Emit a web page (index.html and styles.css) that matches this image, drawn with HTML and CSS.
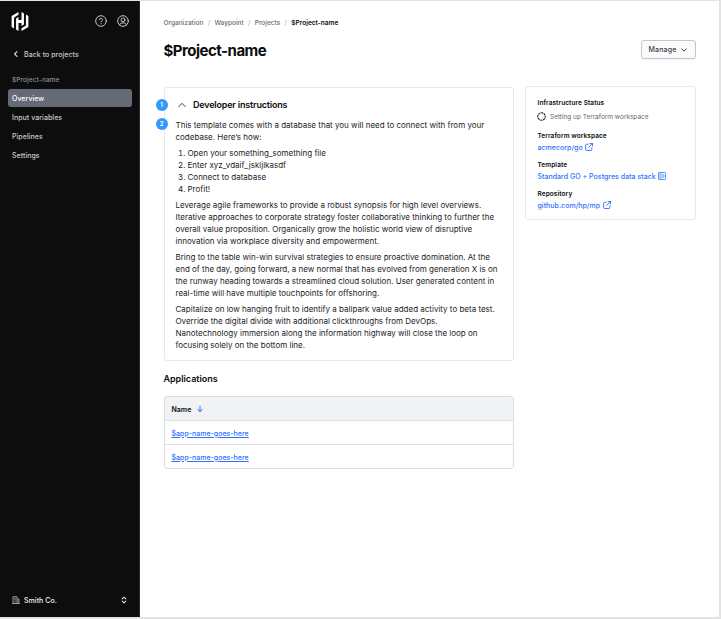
FILE: index.html
```html
<!DOCTYPE html>
<html lang="en">
<head>
<meta charset="utf-8">
<title>$Project-name</title>
<link rel="stylesheet" href="styles.css">
</head>
<body>
<div class="app">
  <aside class="sidebar">
    <div class="brand">
      <svg class="logo" viewBox="0 0 24 24" fill="#fff"><path d="M10.1 0L1.4 5.03v13.95l3.1 1.8V6.8l5.6-3.24zM13.9 0v10h-3.8V6.4L7 8.2v13.98L10.1 24V14h3.8v3.6l3.1-1.8V1.8zM13.9 24l8.7-5.03V5.03l-3.1-1.8V17.2l-5.6 3.25z"/></svg>
      <svg class="top-icon" viewBox="0 0 16 16" fill="none" stroke="#c9cacf" stroke-width="1.3" stroke-linecap="round"><circle cx="8" cy="8" r="7.1"/><path d="M6 6.3a2 2 0 1 1 2.9 1.8c-.6.3-.9.6-.9 1.3M8 11.7v.1"/></svg>
      <svg class="top-icon" viewBox="0 0 16 16" fill="none" stroke="#c9cacf" stroke-width="1.3" stroke-linecap="round"><circle cx="8" cy="8" r="7.1"/><circle cx="8" cy="6.5" r="2.6"/><path d="M3.6 13.2c.3-1.7 1.3-2.5 2.7-2.5h3.4c1.4 0 2.4.8 2.7 2.5"/></svg>
    </div>
    <a class="back"><svg viewBox="0 0 8 8" fill="none" stroke="#dcdde0" stroke-width="1.1" stroke-linecap="round" stroke-linejoin="round"><path d="M5 1.6L2.6 4 5 6.4"/></svg><span>Back to projects</span></a>
    <div class="nav-title"><span>$Project-name</span></div>
    <nav>
      <a class="active"><span>Overview</span></a>
      <a><span>Input variables</span></a>
      <a><span>Pipelines</span></a>
      <a><span>Settings</span></a>
    </nav>
    <div class="org">
      <svg viewBox="0 0 16 16" fill="none" stroke="#c2c5cb" stroke-width="1.5"><path d="M2 15V1.5h8V15M10 6h4v9M.5 15h15M4.5 4.5h3M4.5 7.5h3M4.5 10.5h3M12 9v3M6 15v-2"/></svg>
      <span>Smith Co.</span>
      <svg class="updown" viewBox="0 0 8 8" fill="none" stroke="#dcdde0" stroke-width="1.1" stroke-linecap="round" stroke-linejoin="round"><path d="M2.2 2.9L4 1.2l1.8 1.7M2.2 5.1L4 6.8l1.8-1.7"/></svg>
    </div>
  </aside>
  <main>
    <div class="crumbs"><span>Organization</span><i>/</i><span>Waypoint</span><i>/</i><span>Projects</span><i>/</i><b>$Project-name</b></div>
    <header>
      <h1>$Project-name</h1>
      <button>Manage<svg viewBox="0 0 8 8" fill="none" stroke="#3b3d45" stroke-width="1" stroke-linecap="round" stroke-linejoin="round"><path d="M1.8 3L4 5.2 6.2 3"/></svg></button>
    </header>
    <div class="columns">
      <div class="left">
        <section class="card instructions">
          <em class="pin one">1</em>
          <em class="pin two">2</em>
          <h2><svg viewBox="0 0 8 8" fill="none" stroke="#3b3d45" stroke-width="1" stroke-linecap="round" stroke-linejoin="round"><path d="M.8 5.6L4 2.3l3.2 3.3"/></svg>Developer instructions</h2>
          <p>This template comes with a database that you will need to connect with from your<br>codebase. Here’s how:</p>
          <ol>
            <li>Open your something_something file</li>
            <li>Enter xyz_vdaif_jskljlkasdf</li>
            <li>Connect to database</li>
            <li>Profit!</li>
          </ol>
          <p>Leverage agile frameworks to provide a robust synopsis for high level overviews.<br>Iterative approaches to corporate strategy foster collaborative thinking to further the<br>overall value proposition. Organically grow the holistic world view of disruptive<br>innovation via workplace diversity and empowerment.</p>
          <p>Bring to the table win-win survival strategies to ensure proactive domination. At the<br>end of the day, going forward, a new normal that has evolved from generation X is on<br>the runway heading towards a streamlined cloud solution. User generated content in<br>real-time will have multiple touchpoints for offshoring.</p>
          <p>Capitalize on low hanging fruit to identify a ballpark value added activity to beta test.<br>Override the digital divide with additional clickthroughs from DevOps.<br>Nanotechnology immersion along the information highway will close the loop on<br>focusing solely on the bottom line.</p>
        </section>
        <h3>Applications</h3>
        <div class="table">
          <div class="row head"><span>Name</span><svg viewBox="0 0 8 8" fill="none" stroke="#2e71ff" stroke-width="1" stroke-linecap="round" stroke-linejoin="round"><path d="M4 1.2v5.4M1.7 4.4L4 6.7l2.3-2.3"/></svg></div>
          <div class="row"><a>$app-name-goes-here</a></div>
          <div class="row"><a>$app-name-goes-here</a></div>
        </div>
      </div>
      <aside class="card status">
        <h4>Infrastructure Status</h4>
        <div class="progress"><svg viewBox="0 0 16 16" fill="none" stroke="#2b2d33" stroke-width="2"><circle cx="8" cy="8" r="6.7" stroke-dasharray="4.3 .96" stroke-dashoffset="2"/></svg><span>Setting up Terraform workspace</span></div>
        <h4>Terraform workspace</h4>
        <a><span>acmecorp/go</span><svg viewBox="0 0 16 16" fill="none" stroke="#2e71ff" stroke-width="1.8" stroke-linecap="round" stroke-linejoin="round"><path d="M6.5 2.5H3A1.8 1.8 0 0 0 1.2 4.3v8.9A1.8 1.8 0 0 0 3 15h8.8a1.8 1.8 0 0 0 1.8-1.8V9.7M10 1h5v5M15 1L7.3 8.7"/></svg></a>
        <h4>Template</h4>
        <a><span>Standard GO + Postgres data stack</span><svg viewBox="0 0 16 16" fill="none" stroke="#2e71ff" stroke-width="1.5" stroke-linejoin="round"><rect x="1" y="1" width="14" height="14" rx="1.5"/><path d="M4 1v14M7 4.2h2.4L12.6 8l-3.2 3.8H7M7 6.2L8.8 8 7 9.8"/></svg></a>
        <h4>Repository</h4>
        <a><span>github.com/hp/mp</span><svg viewBox="0 0 16 16" fill="none" stroke="#2e71ff" stroke-width="1.8" stroke-linecap="round" stroke-linejoin="round"><path d="M6.5 2.5H3A1.8 1.8 0 0 0 1.2 4.3v8.9A1.8 1.8 0 0 0 3 15h8.8a1.8 1.8 0 0 0 1.8-1.8V9.7M10 1h5v5M15 1L7.3 8.7"/></svg></a>
      </aside>
    </div>
  </main>
</div>
</body>
</html>
```
FILE: styles.css
```css
* { box-sizing: border-box; }
body { margin: 0; background: #e3e3e3; font-family: Inter, "Liberation Sans", sans-serif; color: #0c0c0e; }
svg { display: block; flex: none; }
h1, h2, h3, h4, p, ol { margin: 0; }
.app { display: flex; height: 619px; padding: 1px 2px 2px 0; }

.sidebar { width: 140px; background: #0d0d0e; color: #c9cacf; padding: 10px 8px 0; display: flex; flex-direction: column; font-size: 7px; font-weight: 500; letter-spacing: .05px; border-right: 1px solid #28282a; }
.brand { display: flex; align-items: center; height: 20px; padding: 0 2px 0 2px; gap: 10px; }
.logo { width: 20px; height: 19px; margin-right: auto; }
.top-icon { width: 12px; height: 12px; }
.back { display: flex; align-items: center; height: 12px; margin-top: 17px; padding-left: 4px; gap: 4px; }
.back svg { width: 8px; height: 8px; }
.nav-title { margin-top: 14px; height: 12px; line-height: 13px; padding-left: 4px; font-size: 6.5px; letter-spacing: .1px; color: #8c909c; }
nav { display: flex; flex-direction: column; gap: 1px; margin-top: 3px; }
nav a { height: 18px; line-height: 20px; border-radius: 3px; padding-left: 4px; }
nav .active { width: 124px; background: #656a76; color: #fff; }
.org { display: flex; align-items: center; margin-top: auto; margin-bottom: 11px; height: 12px; padding: 0 3px 0 4px; gap: 4px; color: #efeff1; }
.org svg { width: 8px; height: 8px; }
.org .updown { margin-left: auto; }

main { flex: 1; background: #fff; padding: 15px 23px 0 23.5px; }
.crumbs { display: flex; height: 12px; line-height: 14px; font-size: 6.5px; letter-spacing: .02px; color: #656a76; font-weight: 500; }
.crumbs i { font-style: normal; color: #b5b7bd; width: 11px; text-align: center; }
.crumbs b { font-weight: 600; color: #0c0c0e; }
header { display: flex; justify-content: space-between; align-items: center; height: 19px; margin-top: 12px; }
h1 { font-size: 15px; font-weight: 700; line-height: 19px; padding-top: 2px; letter-spacing: -.5px; }
button { display: flex; align-items: center; justify-content: center; gap: 4px; width: 55px; height: 19px; padding: 0; border: 1px solid #c2c5cb; border-radius: 3px; background: #fafafa; color: #3b3d45; font: 500 7px Inter, sans-serif; letter-spacing: .15px; box-shadow: 0 1px 1px #0000000d; }
button svg { width: 8px; height: 8px; }
.columns { display: flex; align-items: flex-start; justify-content: space-between; margin-top: 27px; }
.left { width: 350px; margin-top: 1px; }
.card { border: 1px solid #e7e8ea; border-radius: 3px; background: #fff; }
.instructions { position: relative; height: 274px; padding: 11px 11px 0; font-size: 8px; line-height: 12px; color: #1c1c1f; }
.instructions p { margin-top: 4px; white-space: nowrap; }
.instructions h2 { display: flex; align-items: center; gap: 7.5px; height: 12px; margin-bottom: 8px; padding-left: 2px; font-size: 9px; letter-spacing: -.19px; font-weight: 600; color: #0c0c0e; }
.instructions h2 svg { width: 8px; height: 8px; }
ol { margin-top: 4px; padding-left: 12px; }
.pin { position: absolute; left: -9px; width: 12px; height: 12px; border-radius: 50%; background: #3399ff; color: #fff; font: 600 6px/12px Inter, sans-serif; text-align: center; }
.one { top: 11px; }
.two { top: 30px; }
h3 { font-size: 9px; line-height: 12px; font-weight: 600; margin-top: 12px; letter-spacing: -.03px; }
.table { margin-top: 11px; border: 1px solid #dcdde0; border-radius: 3px; overflow: hidden; }
.row { display: flex; align-items: center; height: 24px; padding: 1px 0 0 7px; font-size: 7px; letter-spacing: .02px; }
.row + .row { border-top: 1px solid #dfe0e3; }
.head { height: 23px; gap: 4.5px; background: #f1f2f3; font-weight: 600; }
.head svg { width: 8px; height: 8px; }
.row a { color: #2e71ff; font-weight: 500; text-decoration: underline; text-underline-offset: 1px; }

.status { width: 171px; height: 134px; padding: 9.5px 11px 0 11.5px; font-size: 7px; line-height: 12px; }
.status h4 { font-size: 6.5px; font-weight: 600; letter-spacing: .08px; }
.progress { display: flex; align-items: center; gap: 4px; height: 12px; margin: 2px 0 7px; margin-left: -.5px; font-size: 6.5px; letter-spacing: -.02px; color: #656a76; }
.status svg { width: 9px; height: 9px; }
.status a { display: flex; align-items: center; gap: 2.5px; height: 12px; margin-bottom: 5px; color: #2e71ff; font-weight: 500; letter-spacing: .03px; }
.status a svg { width: 8px; height: 8px; margin-top: -1px; }
```
